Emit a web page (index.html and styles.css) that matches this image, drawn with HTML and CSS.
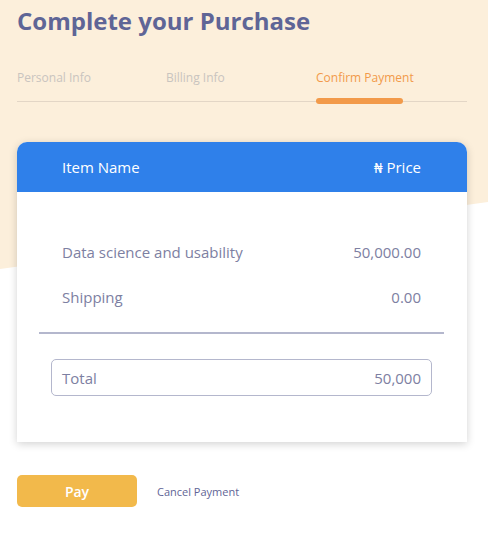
FILE: index.html
```html
<!DOCTYPE html>
<html>
<head>
<meta charset="utf-8">
<link rel="stylesheet" href="styles.css">
</head>
<body>
<div class="bg"></div>
<main class="page">
  <h1 class="title">Complete your Purchase</h1>
  <nav class="steps">
    <div class="step">Personal Info</div>
    <div class="step">Billing Info</div>
    <div class="step active">Confirm Payment</div>
  </nav>
  <section class="card">
    <div class="card-head">
      <span>Item Name</span>
      <span>₦ Price</span>
    </div>
    <div class="card-body">
      <div class="row"><span>Data science and usability</span><span>50,000.00</span></div>
      <div class="row"><span>Shipping</span><span>0.00</span></div>
      <hr class="divider">
      <div class="total"><span>Total</span><span>50,000</span></div>
    </div>
  </section>
  <div class="actions">
    <button class="pay">Pay</button>
    <a class="cancel">Cancel Payment</a>
  </div>
</main>
</body>
</html>
```
FILE: styles.css
```css
* { box-sizing: border-box; }
html, body { margin: 0; padding: 0; background: #fff; }
body {
  font-family: "Open Sans", "Noto Sans", sans-serif;
  position: relative;
  min-height: 544px;
}
.bg {
  position: absolute;
  top: 0; left: 0;
  width: 100%;
  height: 270px;
  background: #fcefdb;
  clip-path: polygon(0 0, 100% 0, 100% 202px, 0 269px);
  z-index: 0;
}
.page {
  position: relative;
  z-index: 1;
  padding: 0 21px 0 17px;
}
.title {
  margin: 0;
  padding-top: 5px;
  font-size: 24px;
  line-height: 32px;
  font-weight: 700;
  color: #5f6596;
}
.steps {
  display: grid;
  grid-template-columns: 149px 150px 151px;
  margin-top: 33px;
  border-bottom: 1px solid #e3d6c6;
}
.step {
  font-size: 12px;
  line-height: 16px;
  color: #c9c4bf;
  padding-bottom: 15px;
  position: relative;
}
.step.active { color: #f29a4a; }
.step.active::after {
  content: "";
  position: absolute;
  left: 0;
  bottom: -3px;
  width: 87px;
  height: 6px;
  border-radius: 3px;
  background: #f29a4a;
}
.card {
  margin-top: 40px;
  width: 450px;
  background: #fff;
  border-radius: 10px 10px 0 0;
  box-shadow: 0 2px 8px rgba(0,0,0,0.18);
}
.card-head {
  height: 50px;
  background: #2f80ea;
  border-radius: 10px 10px 0 0;
  display: flex;
  align-items: center;
  justify-content: space-between;
  padding: 0 46px 0 45px;
  color: #fff;
  font-size: 15px;
}
.card-body {
  padding: 40px 0 46px;
  color: #7d80a2;
  font-size: 15px;
}
.row {
  display: flex;
  justify-content: space-between;
  padding: 0 46px 0 45px;
  height: 45px;
  line-height: 40px;
}
.divider {
  margin: 10px 23px 0 22px;
  border: 0;
  height: 2px;
  background: #b4b7cd;
}
.total {
  margin: 25px 35px 0 34px;
  height: 37px;
  border: 1px solid #b4b7cd;
  border-radius: 5px;
  display: flex;
  align-items: center;
  justify-content: space-between;
  padding: 0 10px;
}
.actions {
  margin-top: 33px;
  display: flex;
  align-items: center;
  gap: 20px;
}
.pay {
  width: 120px;
  height: 32px;
  border: 0;
  border-radius: 5px;
  background: #f2b94b;
  color: #fff;
  font-family: inherit;
  font-size: 14px;
  font-weight: 600;
}
.cancel {
  font-size: 11px;
  color: #5f6596;
}
```
